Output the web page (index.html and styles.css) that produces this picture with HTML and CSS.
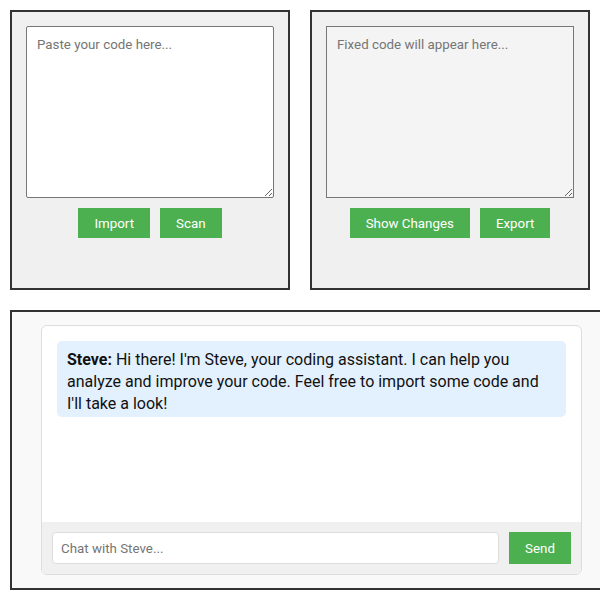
FILE: index.html
```
<!DOCTYPE html>
<html>
<head>
<meta charset="utf-8">
<link rel="stylesheet" href="styles.css">
</head>
<body>
<div class="top">
  <div class="panel">
    <textarea class="code" placeholder="Paste your code here..."></textarea>
    <div class="buttons">
      <button class="btn">Import</button>
      <button class="btn">Scan</button>
    </div>
  </div>
  <div class="panel">
    <textarea class="code readonly" readonly placeholder="Fixed code will appear here..."></textarea>
    <div class="buttons">
      <button class="btn">Show Changes</button>
      <button class="btn">Export</button>
    </div>
  </div>
</div>
<div class="chat-panel">
  <div class="chat-card">
    <div class="messages">
      <div class="bubble"><strong>Steve:</strong> Hi there! I'm Steve, your coding assistant. I can help you analyze and improve your code. Feel free to import some code and I'll take a look!</div>
    </div>
    <div class="input-row">
      <input class="chat-input" type="text" placeholder="Chat with Steve...">
      <button class="btn send">Send</button>
    </div>
  </div>
</div>
</body>
</html>
```
FILE: styles.css
```
html { overflow: hidden; }
body {
  margin: 0;
  padding: 10px;
  font-family: Roboto, "Liberation Sans", sans-serif;
  background: #fff;
}
.top {
  display: grid;
  grid-template-columns: 280px 280px;
  gap: 20px;
}
.panel {
  box-sizing: border-box;
  height: 280px;
  border: 2px solid #333;
  background: #f0f0f0;
  padding: 14px;
}
.code {
  display: block;
  box-sizing: border-box;
  width: 248px;
  height: 172px;
  margin: 0;
  padding: 10px;
  border: 1px solid #767676;
  border-radius: 2px;
  background: #fff;
  font-family: Roboto, "Liberation Sans", sans-serif;
  font-size: 13.333px;
  color: #333;
}
.code::placeholder { color: #757575; }
.code.readonly { background: #f4f4f4; border-radius: 0; }
.buttons {
  display: flex;
  justify-content: center;
  gap: 10px;
  margin-top: 10px;
}
.btn {
  height: 30px;
  padding: 0 16px;
  border: none;
  background: #4caf50;
  color: #fff;
  font-family: Roboto, "Liberation Sans", sans-serif;
  font-size: 13.333px;
  cursor: pointer;
}
.chat-panel {
  margin-top: 20px;
  width: 603px;
  box-sizing: border-box;
  height: 280px;
  border: 2px solid #333;
  background: #f9f9f9;
  padding: 13px 29px;
}
.chat-card {
  box-sizing: border-box;
  width: 541px;
  height: 250px;
  border: 1px solid #ddd;
  border-radius: 6px;
  background: #fff;
  display: flex;
  flex-direction: column;
  overflow: hidden;
}
.messages {
  flex: 1;
  padding: 15px;
}
.bubble {
  background: #e3f0fd;
  border-radius: 5px;
  padding: 8px 10px 2px;
  font-size: 16px;
  line-height: 22px;
  color: #111;
}
.bubble strong { font-weight: 700; }
.input-row {
  display: flex;
  gap: 10px;
  padding: 10px;
  background: #f0f0f0;
}
.chat-input {
  flex: 1;
  box-sizing: border-box;
  height: 32px;
  margin: 0;
  padding: 0 8px;
  border: 1px solid #ddd;
  border-radius: 4px;
  font-family: Roboto, "Liberation Sans", sans-serif;
  font-size: 13.333px;
  background: #fff;
}
.chat-input::placeholder { color: #757575; }
.send {
  height: 32px;
  width: 62px;
  padding: 0;
}
```
